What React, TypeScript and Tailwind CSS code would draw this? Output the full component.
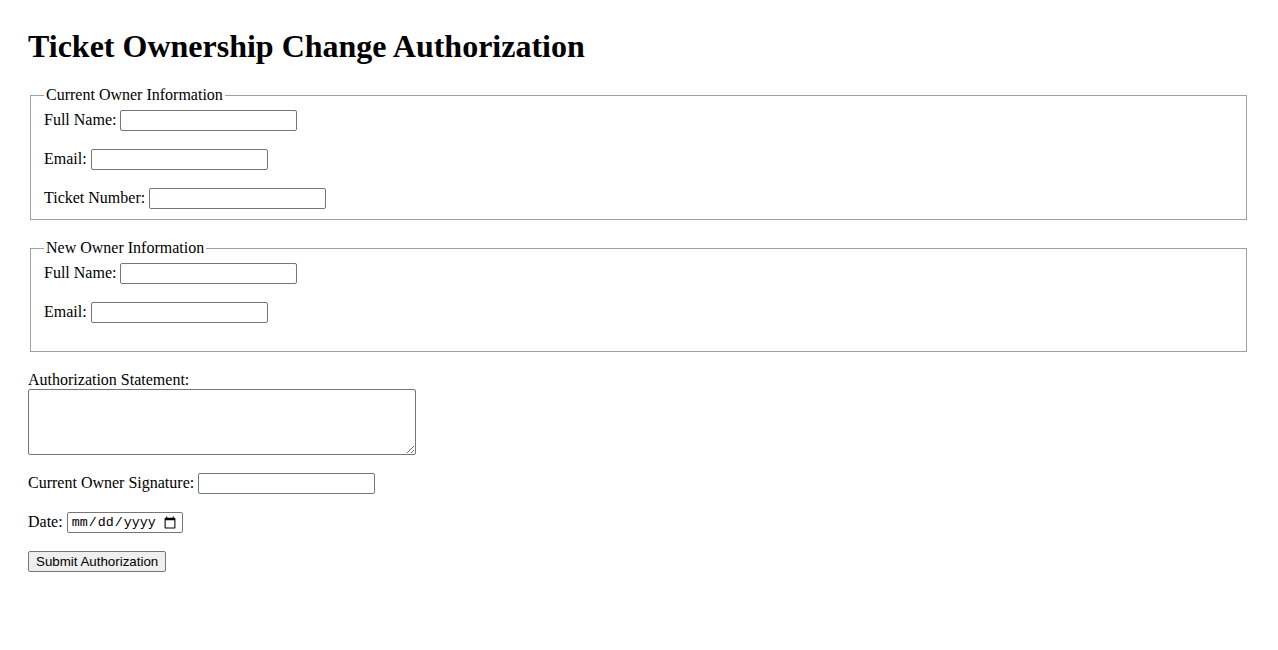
import React from "react";

const inputCls =
  "w-[177px] h-[21px] border border-[#767676] rounded-[2px] px-[2px] bg-white text-[13.33px] font-['Liberation_Sans',Arial,sans-serif]";

const fieldsetCls =
  "ml-[2px] mr-[3px] border border-[#a0a0a0] pl-[13px] pr-3 pt-[6px]";

const Row = ({ label, type = "text" }: { label: string; type?: string }) => (
  <div className="h-[21px] flex items-center gap-1">
    <label className="pb-[2px]">{label}</label>
    <input type={type} className={inputCls} />
  </div>
);

export default function App() {
  return (
    <div className="p-7 bg-white text-black text-[16px] font-['Liberation_Serif','Times_New_Roman',serif] min-h-[650px]">
      <h1 className="text-[32px] font-bold leading-[37px] mb-[21px]">
        Ticket Ownership Change Authorization
      </h1>
      <form onSubmit={(e) => e.preventDefault()}>
        <fieldset className={`${fieldsetCls} pb-[10px]`}>
          <legend className="px-[2px] leading-[18px]">Current Owner Information</legend>
          <div className="flex flex-col gap-[18px]">
            <Row label="Full Name:" />
            <Row label="Email:" type="email" />
            <Row label="Ticket Number:" />
          </div>
        </fieldset>

        <fieldset className={`${fieldsetCls} mt-[19px] pb-[28px]`}>
          <legend className="px-[2px] leading-[18px]">New Owner Information</legend>
          <div className="flex flex-col gap-[18px]">
            <Row label="Full Name:" />
            <Row label="Email:" type="email" />
          </div>
        </fieldset>

        <div className="mt-[19px] leading-[18px]">Authorization Statement:</div>
        <textarea className="block w-[388px] h-[66px] border border-[#767676] rounded-[2px] resize bg-white text-[13.33px] font-['Liberation_Mono',monospace]" />

        <div className="mt-[18px] flex flex-col gap-[18px]">
          <Row label="Current Owner Signature:" />
          <div className="h-[21px] flex items-center gap-1">
            <label className="pb-[2px]">Date:</label>
            <input
              type="date"
              className="w-[116px] h-[21px] border border-[#767676] rounded-[2px] pl-[3px] pr-[3px] bg-white text-[13.33px] font-['Liberation_Mono',monospace]"
            />
          </div>
          <div className="h-[21px] flex items-center">
            <button
              type="submit"
              className="h-[21px] px-[7px] border border-[#767676] rounded-[2px] bg-[#efefef] text-[13.33px] leading-[15px] font-['Liberation_Sans',Arial,sans-serif]"
            >
              Submit Authorization
            </button>
          </div>
        </div>
      </form>
    </div>
  );
}
